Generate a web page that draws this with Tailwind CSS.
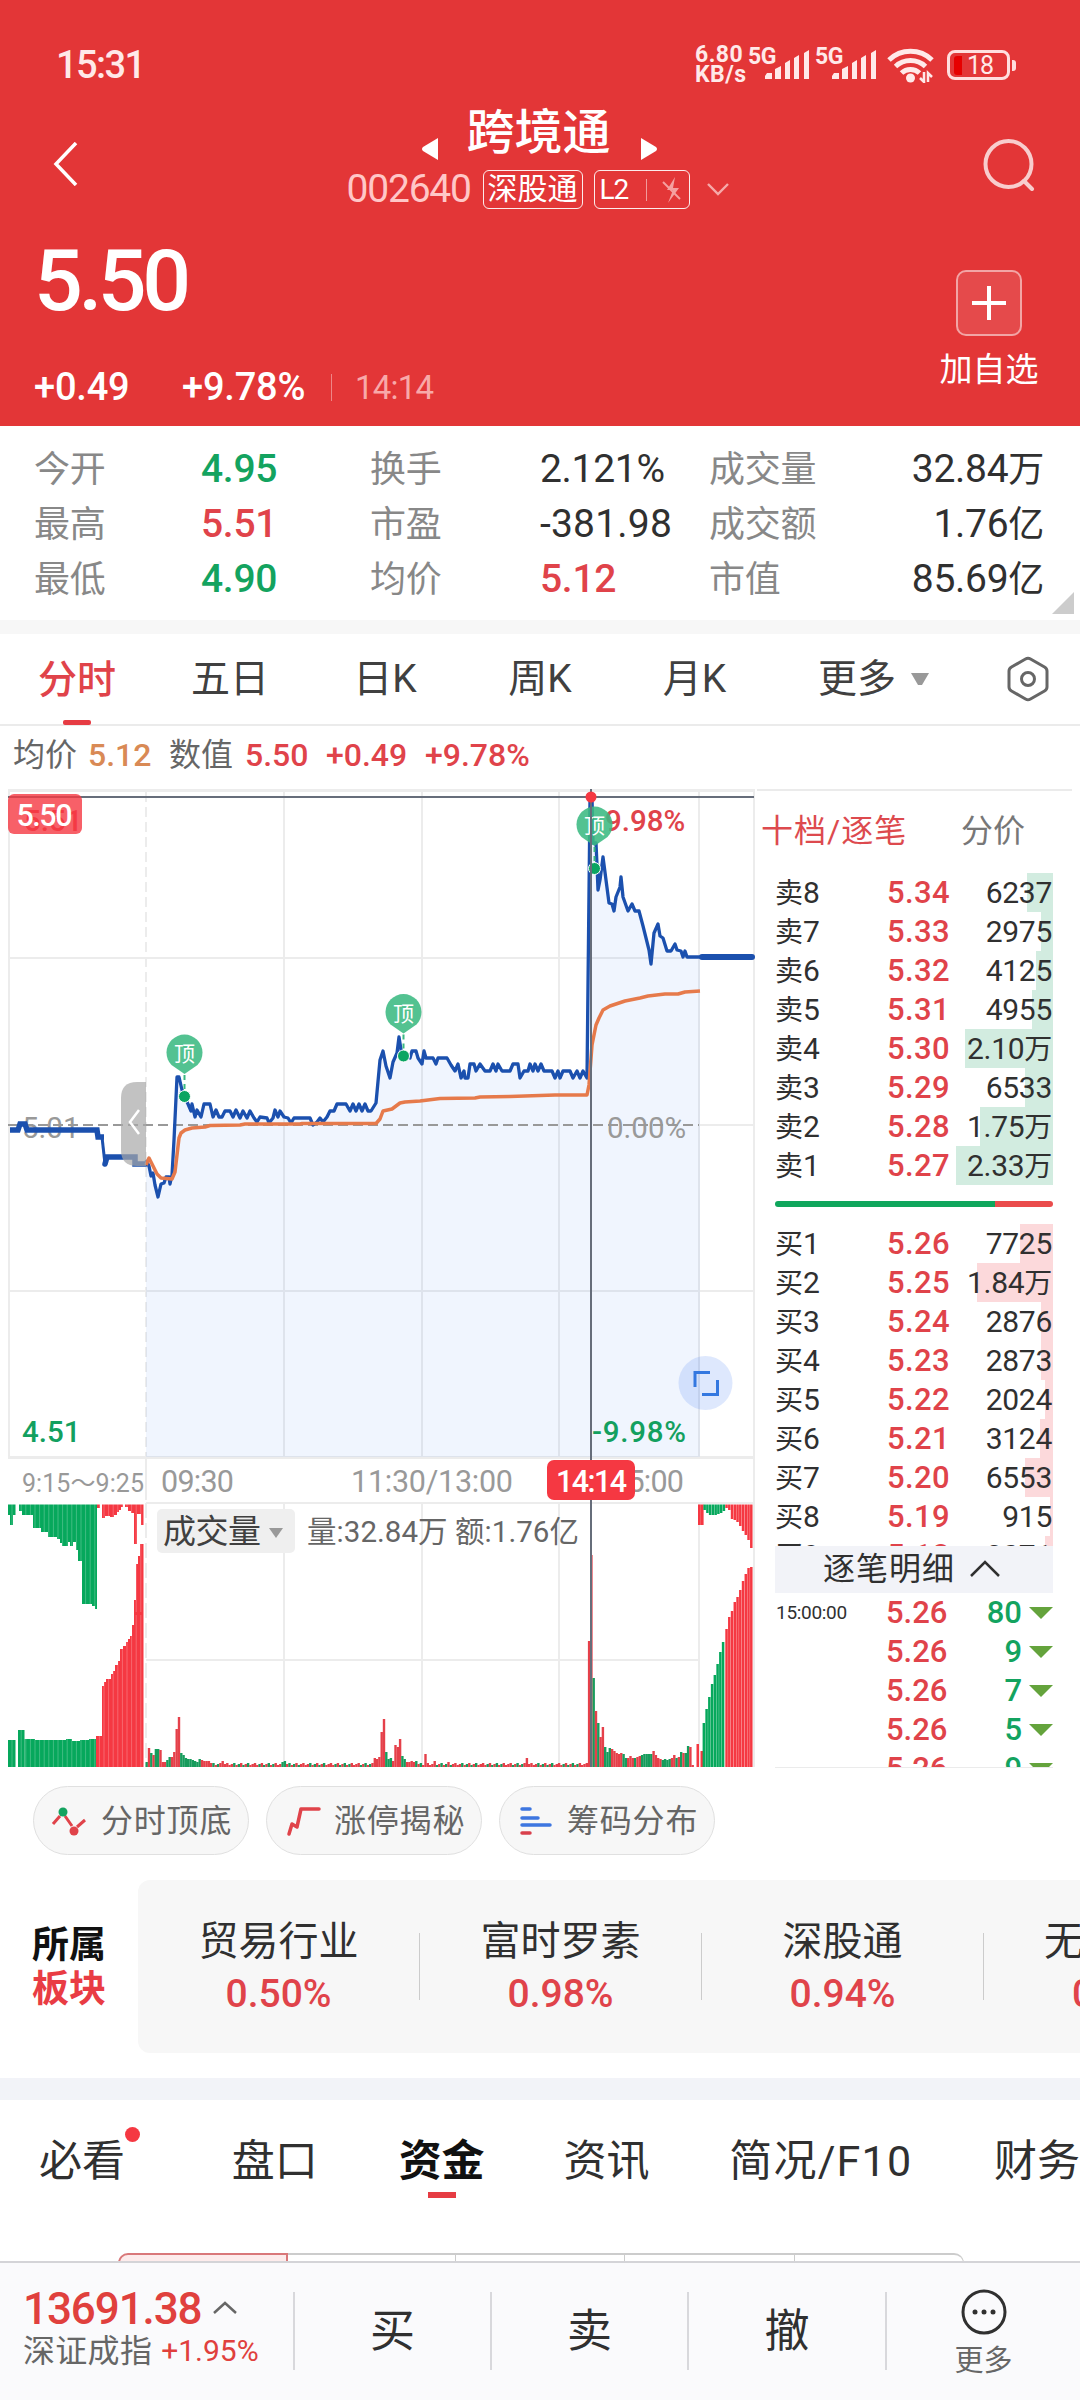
<!doctype html>
<html lang="zh-CN">
<head>
    <meta charset="UTF-8">
    <meta name="viewport" content="width=device-width, initial-scale=1.0">
    <script src="https://cdn.jsdelivr.net/npm/@tailwindcss/browser@4"></script>
    <title>跨境通 002640</title>
</head>
<body class="bg-white">

<div class="w-[1080px] h-[2400px] overflow-hidden flex flex-col bg-white font-[Roboto,'Noto_Sans_CJK_SC',sans-serif] text-[#303030] leading-none whitespace-nowrap">

    <!-- header -->
    <header class="h-[426px] shrink-0 bg-[#e33637] text-white">
        <div class="h-[130px] pl-[56px] pr-[64px] flex items-center justify-between text-[#ffe9e9]">
            <span class="text-[38px] font-medium tracking-[-1.6px]">15:31</span>
            <div class="flex items-center h-[36px]">
                <div class="w-[53px] text-[23px] leading-[20px] font-bold tracking-[0.5px]">6.80<br>KB/s</div>
                <span class="w-[17px] text-[23px] leading-[20px] font-bold self-start tracking-[-0.5px]">5G</span>
                <svg class="w-[45px] h-[30px]" viewBox="0 0 45 30" fill="currentColor">
                    <path d="M0 29v-3l2-3h5v6zM10 29V19l6-3v13zM20 29V13l5-3v19zM29 29V8l5-3v24zM39 29V3l5-3v29z"/>
                </svg>
                <span class="ml-[5px] w-[17px] text-[23px] leading-[20px] font-bold self-start tracking-[-0.5px]">5G</span>
                <svg class="w-[45px] h-[30px]" viewBox="0 0 45 30" fill="currentColor">
                    <path d="M0 29v-3l2-3h5v6zM10 29V19l6-3v13zM20 29V13l5-3v19zM29 29V8l5-3v24zM39 29V3l5-3v29z"/>
                </svg>
                <svg class="ml-[10px] w-[48px] h-[36px]" viewBox="0 0 48 36" fill="none" stroke="currentColor" stroke-width="5">
                    <path d="M2 13a31 31 0 0 1 43 0M8.500 19.500a22 22 0 0 1 30 0M14.500 26a13 13 0 0 1 18 0"/>
                    <circle cx="23.500" cy="31" r="4.500" fill="currentColor" stroke="none"/>
                    <path d="M37 25v10l-4-4M41 35V26l4 4" stroke-width="2.500"/>
                </svg>
                <div class="ml-[12px] w-[63px] h-[30px] rounded-[8px] border-[3px] border-[#ffdede] flex items-center pl-[4px] gap-[5px]">
                    <span class="w-[8px] h-[19px] bg-[#e60000] rounded-l-[3px]"></span>
                    <span class="text-[25px] tracking-[-1px]">18</span>
                </div>
                <span class="ml-[2px] w-[4px] h-[11px] rounded-r-[3px] bg-[#ffdede]"></span>
            </div>
        </div>

        <div class="h-[90px] pl-[53px] pr-[45px] flex justify-between">
            <svg class="mt-[12px] w-[26px] h-[44px]" viewBox="0 0 26 44" fill="none" stroke="#fff" stroke-width="3.500">
                <path d="M23 1L3 22l20 21"/>
            </svg>
            <div class="ml-[13px] flex flex-col">
                <div class="flex items-start h-[40px] pl-[75px]">
                    <svg class="w-[16px] h-[22px] mt-[8px]" viewBox="0 0 16 22" fill="#fff"><path d="M16 0v22L1 13q-2-2 0-4z"/></svg>
                    <span class="ml-[29px] mt-[-21px] w-[144px] text-[48px] font-medium">跨境通</span>
                    <svg class="ml-[30px] w-[16px] h-[22px] mt-[8px]" viewBox="0 0 16 22" fill="#fff"><path d="M0 0v22l15-9q2-2 0-4z"/></svg>
                </div>
                <div class="flex items-center h-[39px]">
                    <span class="w-[136px] text-[39px] tracking-[-1.2px] text-[#ffc7c7]">002640</span>
                    <span class="w-[100px] h-[39px] rounded-[6px] border border-white/90 flex items-center justify-center text-[30px] pb-[2px]">深股通</span>
                    <div class="ml-[11px] w-[96px] h-[39px] rounded-[6px] border border-white/90 flex items-center pl-[5px]">
                        <span class="w-[46px] text-[28px] tracking-[-1px]">L2</span>
                        <span class="w-px h-[22px] bg-white/50"></span>
                        <svg class="ml-[15px] w-[20px] h-[26px]" viewBox="0 0 20 26" fill="#f5a0a0">
                            <path d="M13 0L5 13h6L6 26l11-15h-6z"/>
                            <path d="M1 5l17 17" stroke="#f5a0a0" stroke-width="2"/>
                        </svg>
                    </div>
                    <svg class="ml-[17px] w-[22px] h-[13px]" viewBox="0 0 22 13" fill="none" stroke="#f6a9a9" stroke-width="2.400"><path d="M1 1l10 10L21 1"/></svg>
                </div>
            </div>
            <svg class="mt-[8px] w-[52px] h-[53px]" viewBox="0 0 52 53" fill="none" stroke="#f8cdcd" stroke-width="4">
                <circle cx="25.500" cy="26" r="23"/>
                <path d="M41 43l8 8" stroke-linecap="round"/>
            </svg>
        </div>

        <div class="h-[206px] pl-[34px] pr-[42px] flex justify-between">
            <div>
                <div class="mt-[18px] text-[86px] font-medium tracking-[-4.5px]">5.50</div>
                <div class="mt-[44px] flex items-center h-[38px] text-[38px] font-medium tracking-[-0.2px]">
                    <span class="w-[148px]">+0.49</span>
                    <span class="w-[149px]">+9.78%</span>
                    <span class="w-px h-[27px] bg-white/40"></span>
                    <span class="ml-[23px] text-[33px] font-normal tracking-[-0.8px] text-[#f8a9a9]">14:14</span>
                </div>
            </div>
            <div class="mt-[50px] w-[98px] flex flex-col items-center">
                <div class="w-[66px] h-[66px] rounded-[10px] border-2 border-white/50 bg-white/10 flex items-center justify-center">
                    <svg class="w-[34px] h-[34px]" viewBox="0 0 34 34" stroke="#fff" stroke-width="4"><path d="M17 0v34M0 17h34"/></svg>
                </div>
                <span class="mt-[17px] text-[33px]">加自选</span>
            </div>
        </div>
    </header>

    <!-- quote summary -->
    <section class="relative h-[194px] shrink-0 pt-[16px] pl-[34px] pr-[36px]">
        <div class="grid grid-cols-[167px_169px_170px_169px_1fr_auto] auto-rows-[55px] items-center text-[39px] tracking-[-0.3px]">
            <span class="text-[36px] text-[#888]">今开</span><span class="font-medium text-[#13a35f]">4.95</span>
            <span class="text-[36px] text-[#888]">换手</span><span>2.121%</span>
            <span class="text-[36px] text-[#888]">成交量</span><span class="text-right">32.84<span class="text-[36px]">万</span></span>
            <span class="text-[36px] text-[#888]">最高</span><span class="font-medium text-[#e0434a]">5.51</span>
            <span class="text-[36px] text-[#888]">市盈</span><span class="tracking-[0.2px]">-381.98</span>
            <span class="text-[36px] text-[#888]">成交额</span><span class="text-right">1.76<span class="text-[36px]">亿</span></span>
            <span class="text-[36px] text-[#888]">最低</span><span class="font-medium text-[#13a35f]">4.90</span>
            <span class="text-[36px] text-[#888]">均价</span><span class="font-medium text-[#e0434a]">5.12</span>
            <span class="text-[36px] text-[#888]">市值</span><span class="text-right">85.69<span class="text-[36px]">亿</span></span>
        </div>
        <svg class="absolute right-[6px] bottom-[6px] w-[22px] h-[22px]" viewBox="0 0 22 22"><path d="M22 0v22H0z" fill="#ccc"/></svg>
    </section>
    <div class="h-[14px] shrink-0 bg-[#f7f7f7]"></div>

    <!-- period tabs -->
    <nav class="h-[92px] shrink-0 border-b-2 border-[#ebebeb] flex items-center text-[39px] text-[#404040]">
        <div class="relative h-[91px] w-[154px] pt-[2px] flex items-center justify-center text-[#e0434a] font-medium">分时
            <span class="absolute bottom-0 left-[63px] w-[28px] h-[5px] rounded-[2px] bg-[#e63c43]"></span>
        </div>
        <span class="pt-[1px] w-[152px] text-center">五日</span>
        <span class="pt-[1px] w-[158px] text-center">日K</span>
        <span class="pt-[1px] w-[152px] text-center">周K</span>
        <span class="pt-[1px] w-[157px] text-center">月K</span>
        <span class="pt-[1px] ml-[45px]">更多</span>
        <svg class="ml-[14px] w-[20px] h-[13px]" viewBox="0 0 20 13"><path d="M1 0h18l-7 12h-4z" fill="#999"/></svg>
        <svg class="ml-[77px] w-[42px] h-[46px]" viewBox="0 0 42 46" fill="none" stroke="#666" stroke-width="3">
            <path d="M18.500 3q2.500-1.500 5 0l14 8q2.500 1.500 2.500 4v16q0 2.500-2.500 4l-14 8q-2.500 1.500-5 0l-14-8q-2.500-1.500-2.500-4V15q0-2.500 2.500-4z"/>
            <circle cx="21" cy="23" r="6.500"/>
        </svg>
    </nav>
    <div class="h-[50px] shrink-0 pl-[13px] pt-[7px] flex items-center text-[32px] font-medium text-[#e0434a]">
        <span class="w-[75px] text-[32px] font-normal text-[#666]">均价</span>
        <span class="w-[81px] text-[#d98a55]">5.12</span>
        <span class="w-[76px] text-[32px] font-normal text-[#666]">数值</span>
        <span class="w-[81px]">5.50</span>
        <span class="w-[99px]">+0.49</span>
        <span>+9.78%</span>
    </div>

    <!-- charts + order book -->
    <main class="h-[994px] shrink-0 flex">
        <svg class="w-[757px] h-[994px] shrink-0" viewBox="0 776 757 994">
            <!-- grid -->
            <g stroke="#ececec" stroke-width="2" fill="none">
                <path d="M9 790V1457M284 790V1457M422 790V1457M559 790V1457M699 790V1457M754 790V1767"/>
                <path d="M8 790.500H755M8 1457.500H755" stroke-width="3"/>
                <path d="M9 958H754M9 1291H754M700 1125H754"/>
                <path d="M146 792V1457" stroke-dasharray="10 5"/>
                <path d="M146 1503H754M146 1660H699M284 1503V1767M422 1503V1767M559 1503V1767M699 1503V1767M146 1457V1500"/>
                <path d="M146 1503V1767" stroke-dasharray="15 5"/>
            </g>
            <path id="area" fill="#2a6cf0" fill-opacity="0.07"/>
            <path d="M8 1125H699" stroke="#999" stroke-width="2" stroke-dasharray="10 5"/>

            <g font-size="29.500" font-weight="500">
                <text x="24" y="831" fill="#f0404a">5.51</text>
                <text x="22" y="1138" fill="#999" font-weight="400">5.01</text>
                <text x="22" y="1442" fill="#13a05f">4.51</text>
                <text x="605" y="831" fill="#e0434a">9.98%</text>
                <text x="607" y="1138" fill="#999" font-weight="400">0.00%</text>
                <text x="592" y="1442" fill="#13a05f" textLength="94">-9.98%</text>
            </g>

            <path d="M10 1130H18L20 1124H25L27 1130H97L98 1137H104" stroke="#1b50ae" stroke-width="5.500" fill="none"/>
            <path d="M102 1137L105 1164" stroke="#1b50ae" stroke-width="3" fill="none"/>
            <path d="M105 1164L107 1157H135V1164H146" stroke="#1b50ae" stroke-width="5.500" fill="none" stroke-linecap="round"/>
            <path id="price" stroke="#1b50ae" stroke-width="3.300" fill="none" stroke-linejoin="round"/>
            <path d="M702 957H752" stroke="#1b50ae" stroke-width="6" stroke-linecap="round"/>
            <path d="M146 1165L149 1158L153 1166L157 1174L161 1178L172 1179L175 1172L177 1155L179 1138L181 1133L185 1130L192 1128L205 1127L210 1125.500L240 1125L245 1124H300L302 1123.500H376L380 1119L383 1111L392 1109L400 1103L405 1102L420 1101L440 1098.500L475 1098L480 1097L510 1096.500L555 1095H587L589 1085L592 1045L596 1025L599 1018L603 1010L610 1006L625 1001L640 998L648 996L665 994L678 994L685 992L700 991"
                  stroke="#e67a4b" stroke-width="3.500" fill="none" stroke-linejoin="round"/>

            <!-- peak markers -->
            <g id="pins" fill="#fff" font-size="21" text-anchor="middle"></g>

            <!-- volume -->
            <g id="volume"></g>

            <!-- crosshair -->
            <path d="M8 797H754M591 789V1767" stroke="#666d7a" stroke-width="2"/>
            <circle cx="591" cy="797" r="5.500" fill="#f53842"/>
            <rect x="8" y="794" width="74" height="40" rx="6" fill="#f53842" fill-opacity="0.8"/>
            <text x="16.500" y="826" font-size="30.500" font-weight="500" fill="#fff" textLength="56">5.50</text>

            <path d="M146 1082H137Q121 1082 121 1098V1150Q121 1166 137 1166H146z" fill="#a8a8a8" fill-opacity="0.700"/>
            <path d="M139 1110L130 1122L139 1134" stroke="#fff" stroke-width="2.500" fill="none"/>

            <circle cx="705.500" cy="1383" r="27" fill="#5a8bf5" fill-opacity="0.200"/>
            <path d="M695 1387V1372.500H710M702 1394.500H717.500V1380" stroke="#3478e0" stroke-width="3" fill="none"/>

            <g font-size="30.500" fill="#999">
                <text x="22" y="1492" font-size="25" textLength="122">9:15～9:25</text>
                <text x="161" y="1492" textLength="73">09:30</text>
                <text x="351" y="1492" textLength="162">11:30/13:00</text>
                <text x="611" y="1492" textLength="73">15:00</text>
                <rect x="547" y="1460" width="88" height="40" rx="7" fill="#f53842"/>
                <text x="556" y="1492" fill="#fff" font-weight="500" textLength="71">14:14</text>
            </g>

            <rect x="157" y="1509" width="138" height="44" rx="5" fill="#efefef"/>
            <text x="163" y="1543" font-size="33" fill="#404040" textLength="98">成交量</text>
            <path d="M269 1528H283L276 1538z" fill="#999"/>
            <text x="307" y="1542" font-size="29.500" fill="#666" textLength="272">量:32.84万 额:1.76亿</text>
        </svg>

        <aside class="w-[315px] h-[992px] mt-[13px] border-t-2 border-[#ebebeb] pl-[4px] pr-[19px]">
            <div class="h-[82px] flex items-center text-[32px] pb-[3px]">
                <span class="w-[200px] tracking-[1px] text-[#dd4a4e]">十档/逐笔</span>
                <span class="text-[#777]">分价</span>
            </div>
            <div class="pl-[14px]">
                <div id="sells"></div>
                <div class="mt-[16px] flex h-[6px] rounded-full overflow-hidden">
                    <span class="w-[220px] bg-[#0fa65c]"></span><span class="flex-1 bg-[#ea4c4c]"></span>
                </div>
                <div id="buys" class="mt-[17px] h-[322px] overflow-hidden"></div>
                <div class="h-[47px] bg-[#f2f3f8] flex items-center justify-center gap-[15px] pr-[5px] text-[32px] tracking-[1px] pb-[2px]">逐笔明细
                    <svg class="w-[30px] h-[17px]" viewBox="0 0 30 17" fill="none" stroke="#303030" stroke-width="2.500"><path d="M1 16L15 2l14 14"/></svg>
                </div>
                <div id="ticks" class="h-[175px] overflow-hidden border-b border-[#ebebeb]"></div>
            </div>
        </aside>
    </main>

    <!-- shortcuts -->
    <div class="h-[110px] shrink-0 pt-[16px] pl-[33px] flex gap-[17px] text-[32px] tracking-[0.8px] text-[#666]">
        <div class="w-[216px] h-[69px] rounded-full border border-[#e0e0e0] bg-[#f7f7f7] flex items-center pl-[17px] gap-[14px]">
            <svg class="w-[36px] h-[30px]" viewBox="0 0 36 30" fill="none" stroke="#e0434a" stroke-width="3">
                <path d="M2 18l7-8M14 10l7 10M26 21l8-7"/>
                <circle cx="12" cy="6" r="4.500" fill="#13a35f" stroke="none"/><circle cx="23" cy="25" r="4.500" fill="#e0434a" stroke="none"/>
            </svg>分时顶底
        </div>
        <div class="w-[216px] h-[69px] rounded-full border border-[#e0e0e0] bg-[#f7f7f7] flex items-center pl-[19px] gap-[13px]">
            <svg class="w-[35px] h-[32px]" viewBox="0 0 35 32" fill="none" stroke="#e0434a" stroke-width="3.500" stroke-linecap="round" stroke-linejoin="round">
                <path d="M3 29l3-10 5 3 4-18h18"/>
            </svg>涨停揭秘
        </div>
        <div class="w-[216px] h-[69px] rounded-full border border-[#e0e0e0] bg-[#f7f7f7] flex items-center pl-[20px] gap-[15px]">
            <svg class="w-[32px] h-[30px]" viewBox="0 0 32 30" fill="none" stroke="#3d76e0" stroke-width="3.500" stroke-linecap="round">
                <path d="M2 3h8M2 12h16M2 19h28"/><path d="M2 27h8" stroke="#d9404c"/>
            </svg>筹码分布
        </div>
    </div>

    <!-- sectors -->
    <section class="h-[198px] shrink-0 flex">
        <div class="w-[138px] h-[173px] shrink-0 pl-[32px] pt-[2px] flex flex-col justify-center gap-[7px] text-[37px] font-bold text-[#111]">
            <span>所属</span><span class="text-[#e93c44]">板块</span>
        </div>
        <div class="w-[1128px] h-[173px] rounded-l-[12px] bg-[#f7f7f7] flex items-center shrink-0 text-[40px]">
            <div class="w-[282px] h-[67px] border-r border-[#ccc] pt-[2px] flex flex-col items-center justify-center gap-[13px]"><span>贸易行业</span><span class="text-[39px] font-medium text-[#e0434a]">0.50%</span></div>
            <div class="w-[282px] h-[67px] border-r border-[#ccc] pt-[2px] flex flex-col items-center justify-center gap-[13px]"><span>富时罗素</span><span class="text-[39px] font-medium text-[#e0434a]">0.98%</span></div>
            <div class="w-[282px] h-[67px] border-r border-[#ccc] pt-[2px] flex flex-col items-center justify-center gap-[13px]"><span>深股通</span><span class="text-[39px] font-medium text-[#e0434a]">0.94%</span></div>
            <div class="w-[282px] h-[67px] pt-[2px] flex flex-col items-center justify-center gap-[13px]"><span class="w-[162px]">无线充电</span><span class="text-[39px] font-medium text-[#e0434a]">0.62%</span></div>
        </div>
    </section>
    <div class="h-[22px] shrink-0 bg-[#f2f3f8]"></div>

    <!-- content tabs -->
    <nav class="h-[120px] shrink-0 pl-[39px] pt-[3px] flex items-center text-[43px]">
        <div class="relative w-[193px]">必看
            <span class="absolute left-[86px] top-[-13px] w-[15px] h-[15px] rounded-full bg-[#f53842]"></span>
        </div>
        <span class="w-[167px]">盘口</span>
        <div class="relative w-[165px] font-bold text-[#111]">资金
            <span class="absolute left-[29px] top-[52px] w-[28px] h-[6px] bg-[#e63c43]"></span>
        </div>
        <span class="w-[166px]">资讯</span>
        <span class="w-[265px] tracking-[1.2px]">简况/F10</span>
        <span>财务</span>
    </nav>
    <div class="h-[41px] shrink-0 pt-[33px] pl-[118px] overflow-hidden">
        <div class="w-[846px] h-[40px] flex">
            <span class="w-[170px] rounded-tl-[10px] border-2 border-[#d9787a] bg-[#fdecec]"></span>
            <span class="w-[168px] border-t-2 border-r border-[#ccc]"></span>
            <span class="w-[169px] border-t-2 border-r border-[#ccc]"></span>
            <span class="w-[170px] border-t-2 border-r border-[#ccc]"></span>
            <span class="w-[169px] border-t-2 border-r border-[#ccc] rounded-tr-[10px]"></span>
        </div>
    </div>

    <!-- bottom bar -->
    <footer class="h-[139px] shrink-0 bg-[#fafafc] border-t-2 border-[#d4d4d8] flex items-start pt-[29px]">
        <div class="w-[293px] pl-[23px] flex flex-col">
            <div class="flex items-center h-[34px] gap-[12px]">
                <span class="text-[44px] font-medium tracking-[-1.1px] text-[#e0403d]">13691.38</span>
                <svg class="w-[24px] h-[13px] mb-[4px]" viewBox="0 0 24 13" fill="none" stroke="#666" stroke-width="2.500"><path d="M1 12L12 2l11 10"/></svg>
            </div>
            <div class="mt-[9px] h-[32px] flex items-center gap-[9px]">
                <span class="text-[32px] tracking-[0.3px] text-[#666]">深证成指</span>
                <span class="text-[30px] text-[#e0403d]">+1.95%</span>
            </div>
        </div>
        <div class="w-[197px] h-[78px] border-l-2 border-[#d8d8dc] flex items-center justify-center text-[45px]">买</div>
        <div class="w-[197px] h-[78px] border-l-2 border-[#d8d8dc] flex items-center justify-center text-[45px]">卖</div>
        <div class="w-[198px] h-[78px] border-l-2 border-[#d8d8dc] flex items-center justify-center text-[45px]">撤</div>
        <div class="w-[195px] h-[78px] border-l-2 border-[#d8d8dc] flex flex-col items-center text-[29px] text-[#666]">
            <svg class="mt-[-3px] w-[46px] h-[46px] shrink-0" viewBox="0 0 46 46"><circle cx="23" cy="23" r="21" fill="none" stroke="#303030" stroke-width="3"/><g fill="#303030"><circle cx="14" cy="23" r="2.500"/><circle cx="23" cy="23" r="2.500"/><circle cx="32" cy="23" r="2.500"/></g></svg>
            <span class="mt-[12px]">更多</span>
        </div>
    </footer>
</div>

<script>
    const price = [
        146,1160,149,1166,151,1176,153,1173,155,1185,158,1197,161,1184,164,1183,166,1177,169,1177,170,1184,172,1175,174,1140,177,1077,
        179,1077,182,1090,184,1096,188,1104,191,1111,192,1104,195,1117,197,1110,201,1117,204,1104,210,1104,213,1117,216,1110,219,1117,
        222,1117,225,1111,230,1111,233,1117,236,1110,240,1118,243,1111,247,1118,250,1111,254,1118,257,1122,260,1117,267,1118,269,1123,
        273,1118,275,1110,278,1117,280,1111,284,1117,288,1118,291,1123,294,1118,310,1118,313,1125,317,1122,320,1118,323,1122,327,1117,
        330,1111,334,1111,337,1104,346,1104,350,1111,353,1104,356,1111,359,1104,362,1111,365,1104,368,1111,371,1111,376,1103,380,1060,
        383,1051,386,1066,390,1078,393,1062,397,1053,399,1037,402,1056,410,1058,412,1051,416,1051,418,1058,422,1064,424,1051,426,1058,
        433,1058,436,1064,438,1058,447,1058,451,1065,455,1071,458,1064,461,1078,464,1071,465,1078,468,1078,470,1064,474,1064,476,1071,
        480,1064,485,1071,490,1071,493,1064,496,1071,498,1064,502,1071,510,1071,513,1064,518,1064,520,1078,524,1071,528,1071,530,1064,
        533,1071,535,1064,538,1071,541,1064,544,1071,552,1071,555,1078,558,1071,560,1078,563,1071,570,1071,573,1078,577,1071,580,1078,
        583,1071,587,1078,590,800,592,797,593,843,596,843,597,865,598,890,600,880,603,857,606,880,609,903,612,904,614,911,616,897,
        620,887,621,877,623,897,628,911,632,904,635,911,639,911,643,926,649,950,651,964,654,933,658,924,660,936,663,938,667,951,
        671,951,675,944,677,950,681,951,683,957,685,951,687,957,700,957
    ];
    document.querySelector("#price").setAttribute("d", "M" + price.join(" "));
    document.querySelector("#area").setAttribute("d", "M" + price.join(" ") + " V1457H146z");

    const pins = [[184.5, 1053], [403.5, 1012.5], [594.5, 825]];
    document.querySelector("#pins").innerHTML = pins.map(([x, y]) => `
        <path d="M${x - 13} ${y + 12}A18 18 0 1 1 ${x + 13} ${y + 12}L${x} ${y + 21}z" fill="#3bb982" fill-opacity="0.88"/>
        <text x="${x}" y="${y + 8}">顶</text>
        <path d="M${x} ${y + 22}V${y + 39}" stroke="#3bb982" stroke-width="2" stroke-dasharray="5 4"/>
        <circle cx="${x}" cy="${y + 43.5}" r="6" fill="#0ba562" stroke="#fff" stroke-width="1"/>`).join("");

    const R = "#f53842", G = "#06a85c", BASE = 1767;
    let bars = "";
    function bar(x, w, y1, y2, color) {
        bars += `<rect x="${x}" y="${y1}" width="${w}" height="${y2 - y1}" fill="${color}"/>`;
    }

    // opening auction, unmatched volume hangs from the top: [x1, x2, y]
    [[8,10,1515],[10,13,1525],[13,15.5,1515],[19,22,1511],[22,33,1515],[33,41,1528],[41,48,1532],[48,57,1537],[57,60,1539],[60,62,1543],
     [62,68,1546],[68,70,1542],[70,73,1546],[73,76,1542],[76,78,1550],[78,82,1561],[82,92,1604],[92,95,1606],[95,97,1609]]
        .forEach(([a, b, y]) => bar(a, b - a, 1504.5, y, G));
    [[97,100,1508],[102,105,1518],[105,110,1516],[110,114,1517],[114,117,1515],[117,119,1512],[119,121,1510],[121,123,1507],[125,128,1507],
     [128,131,1511],[131,134,1513],[134,137,1544],[137,141,1514],[141,143.5,1525]]
        .forEach(([a, b, y]) => bar(a, b - a, 1504.5, y, R));
    [[8,15.5,1740],[18,24.5,1730],[24.5,35,1739],[35,66,1740],[66,72,1739],[72,80,1741],[80,89,1740],[89,96,1739]]
        .forEach(([a, b, y]) => bar(a, b - a, y, BASE, G));
    [[96,102,1736],[102,104,1686],[104,106,1682],[106,111,1679],[111,113,1674],[113,115,1671],[115,118,1665],[118,120,1661],[120,123,1649],
     [123,126,1646],[126,128,1642],[128,130,1639],[130,132,1636],[132,134,1625],[134,136,1600],[136,138,1564],[138,140,1556],[140,143.5,1544]]
        .forEach(([a, b, y]) => bar(a, b - a, y, BASE, R));
    for (let x = 12; x < 143; x += 4.6) bars += `<path d="M${x} 1504V1612M${x} 1615V1767" stroke="#fff" stroke-opacity="0.3" stroke-width="0.8"/>`;

    // minute bars, negative means a falling minute
    const spikes = {
        0:-5,1:19,2:-14,3:12,4:-18,5:-18,6:17,7:5,8:5,9:-7,10:-10,11:10,12:15,13:38,14:50,15:-14,16:-12,17:-9,18:-8,19:-8,20:-7,21:-6,
        22:-5,23:-8,24:7,25:6,26:6,27:6,28:4,33:6,59:-5,60:-6,99:9,100:8,101:10,102:35,103:48,104:-15,105:-8,106:-9,107:6,108:22,109:20,
        110:28,111:-11,112:-8,113:5,114:5,115:6,116:5,117:-6,121:13,125:6,131:5,165:9,192:126,193:212,194:-89,195:56,196:-44,197:30,
        198:40,199:-20,200:-15,201:-19,202:18,203:16,204:14,205:13,206:14,207:-13,208:-9,209:9,210:11,211:9,212:-9,213:10,214:11,
        215:-12,216:-13,217:-13,218:-13,219:-13,220:16,221:12,222:9,223:8,224:-7,225:-8,226:-7,227:-8,228:9,229:12,230:-9,231:10,
        232:-15,233:14,234:-14,235:-21,236:20,237:2,238:0,239:0
    };
    for (let i = 0; i < 240; i++) {
        let v = spikes[i];
        if (v === undefined) v = (2 + (i * 7) % 3) * ((i * 5) % 11 < 4 ? -1 : 1);
        const h = Math.abs(v);
        bar((145.5 + i * 2.304).toFixed(1), 2.4, BASE - h, BASE, v < 0 ? "#179c5c" : "#e5404a");
    }

    // closing auction
    [1525,1525].forEach((y, i) => bar(698 + i * 2.8, 2.8, 1504.5, y, R));
    bar(696.5, 2.5, 1744, BASE, R);
    bar(700.5, 2.5, 1751, BASE, R);
    [1510,1513,1515,1515,1515,1514,1513,1511].forEach((y, i) => bar(703.4 + i * 2.75, 2.5, 1504.5, y, G));
    [1508,1510,1519,1520,1522,1526,1531,1535,1540,1548].forEach((y, i) => bar(725.3 + i * 2.75, 2.5, 1504.5, y, R));
    [1723,1709,1697,1684,1675,1664,1652,1642].forEach((y, i) => bar(702.6 + i * 2.75, 2.5, y, BASE, G));
    [1629,1617,1611,1602,1597,1590,1581,1574,1568,1567].forEach((y, i) => bar(725.3 + i * 2.75, 2.5, y, BASE, R));
    document.querySelector("#volume").innerHTML = bars;

    const sells = [["卖8","5.34","6237",26],["卖7","5.33","2975",12],["卖6","5.32","4125",17],["卖5","5.31","4955",21],
        ["卖4","5.30","2.10万",88],["卖3","5.29","6533",28],["卖2","5.28","1.75万",73],["卖1","5.27","2.33万",97]];
    const buys = [["买1","5.26","7725",33],["买2","5.25","1.84万",76],["买3","5.24","2876",12],["买4","5.23","2873",12],["买5","5.22","2024",8],
        ["买6","5.21","3124",13],["买7","5.20","6553",28],["买8","5.19","915",3],["买9","5.18","2071",8]];
    const row = (color) => ([label, p, qty, w]) => `
        <div class="relative h-[39px] flex items-center text-[30px]">
            <span class="absolute right-0 top-0 h-[39px] ${color}" style="width:${w}px"></span>
            <span class="relative w-[112px]"><span class="text-[28px]">${label[0]}</span>${label[1]}</span>
            <span class="relative text-[31px] font-medium tracking-[0.4px] text-[#e0434a]">${p}</span>
            <span class="relative flex-1 text-right pr-[1px] tracking-[-0.3px]">${qty.replace("万", '<span class="text-[28px]">万</span>')}</span>
        </div>`;
    document.querySelector("#sells").innerHTML = sells.map(row("bg-[#d2ece0]")).join("");
    document.querySelector("#buys").innerHTML = buys.map(row("bg-[#fcd9db]")).join("");

    document.querySelector("#ticks").innerHTML = [80, 9, 7, 5, 9].map((n, i) => `
        <div class="h-[39px] flex items-center text-[31px] font-medium">
            <span class="w-[111px] pl-[1px] text-[19px] font-normal tracking-[-0.3px]">${i === 0 ? "15:00:00" : ""}</span>
            <span class="text-[#e0434a]">5.26</span>
            <span class="flex-1 text-right text-[#13a35f]">${n}</span>
            <svg class="ml-[7px] w-[24px] h-[12px]" viewBox="0 0 24 12"><path d="M0 0h24L12 12z" fill="#64a33c"/></svg>
        </div>`).join("");
</script>
</body>
</html>
